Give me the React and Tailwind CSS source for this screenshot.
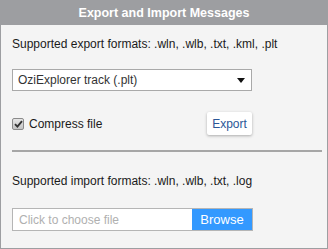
import React from "react";

export default function App() {
  return (
    <div
      className="w-[328px] h-[249px] bg-[#f4f4f4] flex flex-col text-[#1a1a1a]"
      style={{ fontFamily: '"Liberation Sans", Arial, sans-serif' }}
    >
      <div className="h-[25px] bg-[#9d9ea1] flex items-center justify-center text-white font-bold text-[12.5px] leading-none shrink-0 pt-[1px]">
        Export and Import Messages
      </div>
      <div className="flex-1 border-x border-b border-[#9d9ea1] flex flex-col pl-[11px] pr-[6px]">
        <div className="text-[12px] leading-[14px] mt-[12px]">
          Supported export formats: .wln, .wlb, .txt, .kml, .plt
        </div>
        <div className="mt-[18px] w-[240px] h-[22px] bg-white border border-[#a9a9a9] flex items-center justify-between pl-[5px] pr-[6px] text-[12px] text-[#333]">
          <span>OziExplorer track (.plt)</span>
          <svg width="8" height="5" viewBox="0 0 8 5">
            <path d="M0 0 L8 0 L4 5 Z" fill="#111" />
          </svg>
        </div>
        <div className="mt-[21px] h-[23px] w-[240px] flex items-center justify-between">
          <div className="flex items-center gap-[5px]">
            <div className="w-[12px] h-[12px] rounded-[2px] border border-[#8a8a8a] bg-gradient-to-b from-[#e6e6e6] to-[#c4c4c4] flex items-center justify-center">
              <svg width="9" height="8" viewBox="0 0 9 8">
                <path d="M1 4.2 L3.4 6.6 L8 1.2" stroke="#333" strokeWidth="1.9" fill="none" />
              </svg>
            </div>
            <span className="text-[12px]">Compress file</span>
          </div>
          <div className="h-[23px] w-[45px] bg-white rounded-[2px] shadow-[0_1px_3px_rgba(0,0,0,0.3)] flex items-center justify-center text-[12px] text-[#2b5797]">
            Export
          </div>
        </div>
        <div className="mt-[15px] h-[2px] bg-[#a6a6a6] w-[310px]" />
        <div className="text-[12px] leading-[14px] mt-[22px]">
          Supported import formats: .wln, .wlb, .txt, .log
        </div>
        <div className="mt-[20px] w-[241px] h-[23px] flex border border-[#b5b5b5]">
          <div className="flex-1 bg-white flex items-center pl-[6px] text-[12px] text-[#b0b0b0]">
            Click to choose file
          </div>
          <div className="w-[60px] bg-[#3399ff] text-white text-[13px] flex items-center justify-center">
            Browse
          </div>
        </div>
      </div>
    </div>
  );
}
